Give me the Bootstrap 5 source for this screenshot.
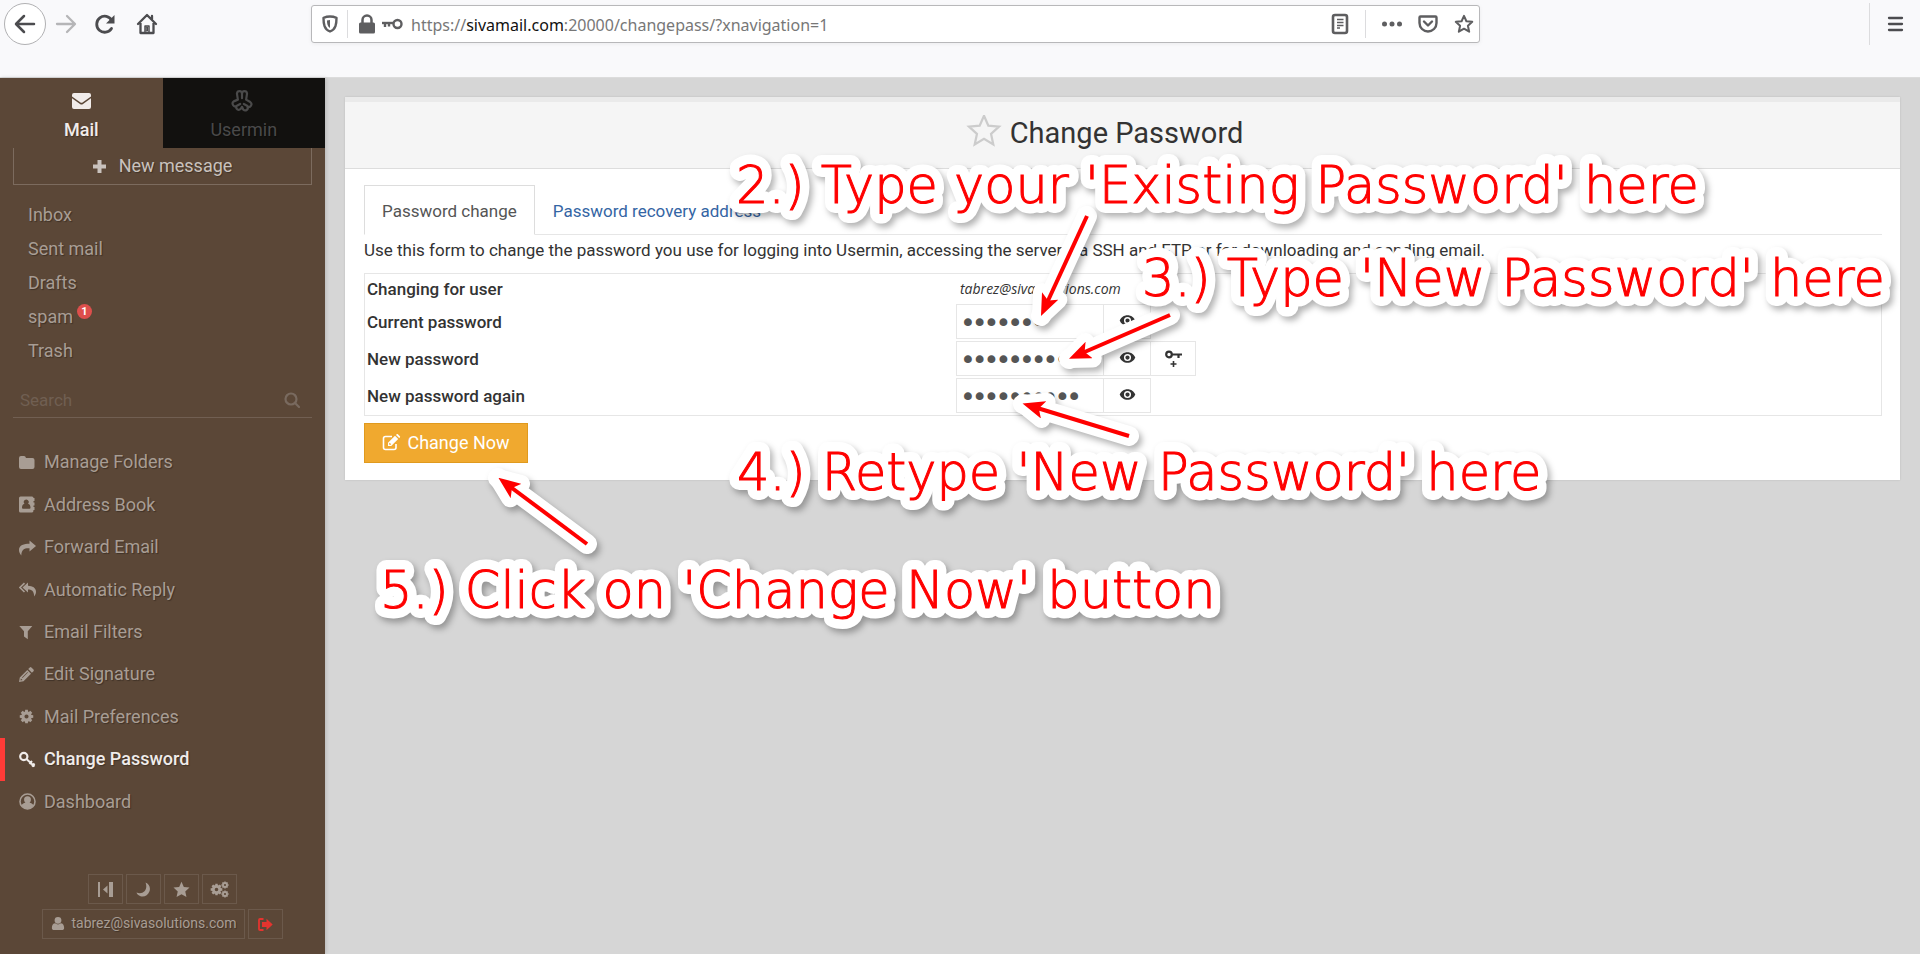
<!DOCTYPE html>
<html lang="en">
<head>
<meta charset="utf-8">
<meta name="viewport" content="width=device-width, initial-scale=1">
<title>Change Password</title>
<link rel="stylesheet" href="https://cdn.jsdelivr.net/npm/bootstrap@5.3.0/dist/css/bootstrap.min.css">
<style>
  body { font-family: Roboto, "Liberation Sans", sans-serif; font-size: 17px; line-height: 24px; color: #333; background: #d6d6d6; }
  svg { flex: none; display: block; }
  button { background: none; border: 0; padding: 0; color: inherit; }

  /* browser toolbar */
  .toolbar { height: 78px; padding: 3px 16px 0 4px; background: #f9f9fb; border-bottom: 1px solid #dcdcdc; color: #4c4c4f; }
  .tool-row { height: 42px; }
  .nav-circle { width: 42px; height: 42px; border: 1px solid #b1b1b3; border-radius: 50%; background: #fff; }
  .nav-tools { width: 307px; flex: none; }
  .url-box { width: 1169px; height: 38px; border: 1px solid #b8b8ba; border-radius: 3px; background: #fff; color: #5e5e60; padding: 0 5px 0 9px; box-shadow: 0 1px 4px rgba(0,0,0,.06); }
  .url-text { font-family: "Noto Sans", "Open Sans", sans-serif; font-size: 16px; color: #777; padding-top: 2px; }
  .url-text b { font-weight: 400; color: #111; }
  .vline { width: 1px; height: 28px; background: #dcdcde; flex: none; }
  .vline-tall { height: 42px; }

  /* sidebar */
  .side { width: 325px; flex: none; background: #5b4737; color: #a89d94; font-size: 18px; box-shadow: 1px 0 4px rgba(0,0,0,.15); }
  .side a, .side button { color: inherit; text-decoration: none; text-shadow: 1px 1px 1px rgba(0,0,0,.3); }
  .side-tabs { height: 70px; }
  .side-tab { padding-top: 12px; gap: 6px; }
  .side-tab.active { color: #f1ecea !important; font-weight: 500; }
  .side-tab.dark { background: #12110f; color: #4a4a4a !important; }
  .compose { margin: 0 13px; height: 37px; border: 1px solid #7c6b5e; border-top: 0; color: #c9c2bd !important; gap: 13px; }
  .folders { margin: 13px 0 0 28px; }
  .folders a { height: 34px; }
  .count { width: 15px; height: 15px; border-radius: 50%; background: #dd4f4c; color: #fff; font-size: 11px; font-weight: 700; line-height: 15px; text-align: center; margin: 0 0 12px 4px; text-shadow: none; }
  .find { margin: 15px 13px 0; height: 35px; border-bottom: 1px solid #715f52; padding: 0 12px 0 7px; color: #796a5f; }
  .find input { background: none; border: 0; outline: 0; font-size: 17px; padding: 0; color: inherit; }
  .find input::placeholder { color: #705f52; opacity: 1; }
  .menu { margin-top: 23px; height: 382px; }
  .menu a { gap: 8px; padding-left: 14px; border-left: 5px solid transparent; }
  .menu a.active { border-color: #ff3b37; color: #f0ecea; font-weight: 500; }
  .menu svg { width: 17px; height: 17px; }
  .side-foot { padding-bottom: 15px; gap: 5px; font-size: 14px; }
  .side-foot .boxed { border: 1px solid #6b594b; height: 30px; min-width: 35px; justify-content: center; }
  .side-foot .user { padding: 0 7px 2px 8px; gap: 6px; }
  .gap-3px { gap: 3px; }

  /* content panel */
  .content { padding: 19px 20px; }
  .panel { background: #fff; box-shadow: 0 0 2px rgba(0,0,0,.12); }
  .panel-head { height: 72px; background: #f5f5f5; border-top: 5px solid #eaeaea; border-bottom: 1px solid #ddd; padding: 0 36px 4px 0; gap: 8px; }
  .panel-head h1 { font-size: 29px; font-weight: 400; line-height: 36px; margin: 0; }
  .head-star { color: #ccc; }
  .panel-main { padding: 16px 18px 17px 19px; }
  .tabs { border-bottom: 1px solid #e6e6e6; }
  .tabs a { height: 50px; padding: 2px 17px 0; text-decoration: none; color: #3465a4; border: 1px solid transparent; margin-bottom: -1px; }
  .tabs a.active { color: #555; border-color: #ddd #ddd #fff; background: #fff; }
  .intro { margin: 3px 0 11px; }
  .form-grid { width: 100%; border: 1px solid #e6e6e6; margin-bottom: 7px; border-collapse: separate; border-spacing: 0; }
  .form-grid th { width: 589px; font-weight: 500; padding: 0 2px 2px; }
  .form-grid td { padding: 0 2px 2px; }
  .form-grid tr:first-child > * { padding-top: 3px; padding-bottom: 3px; }
  .form-grid .who { font-family: "Open Sans", sans-serif; font-size: 14px; font-style: italic; }
  .pw { width: 148px; height: 35px; border: 1px solid #e6e6e6; font-family: "DejaVu Sans", sans-serif; font-size: 20px; color: #555; padding: 0 5px; outline: 0; border-radius: 0; -webkit-text-stroke: 2px #555; }
  .side-btn { width: 47px; height: 35px; border: 1px solid #e6e6e6; border-left: 0; padding-bottom: 3px; }
  .key-btn { width: 45px; }
  .save { background: #f0a92f; border: 1px solid #e09a1e; color: #fff; font-size: 18px; height: 40px; width: 164px; gap: 6px; }

  /* step callouts lying over the page */
  .callouts { position: absolute; left: 0; top: 0; pointer-events: none; overflow: hidden; }
  .callouts text { font-family: "DejaVu Sans Light", "DejaVu Sans", sans-serif; font-weight: 200; font-size: 51px; }
  .halo { fill: #fff; stroke: #fff; stroke-width: 20px; stroke-linecap: round; stroke-linejoin: round; filter: drop-shadow(3px 4px 3px rgba(0,0,0,.3)); }
  .ink { fill: #f00; stroke: #f00; stroke-width: 1px; }
  .shaft { stroke-width: 4px; }
</style>
</head>
<body class="d-flex flex-column min-vh-100 position-relative">

<svg width="0" height="0" class="position-absolute" aria-hidden="true">
  <symbol id="star-o" viewBox="0 0 24 24"><path d="M12 2.200l2.900 6.500 7 .7-5.200 4.800 1.500 7L12 17.600l-6.200 3.600 1.500-7L2.100 9.400l7-.7z" fill="none" stroke="currentColor" stroke-width="2.400" stroke-linejoin="round"/></symbol>
  <symbol id="eye" viewBox="0 0 24 24"><path fill="currentColor" d="M12 4.500C7 4.500 2.700 7.600 1 12c1.700 4.400 6 7.500 11 7.500s9.300-3.100 11-7.500c-1.700-4.400-6-7.500-11-7.500zM12 17a5 5 0 1 1 0-10 5 5 0 0 1 0 10zm0-8a3 3 0 1 0 0 6 3 3 0 0 0 0-6z"/></symbol>
  <symbol id="person" viewBox="0 0 16 16"><path fill="currentColor" d="M8 8.300a3.900 3.900 0 1 0 0-7.800 3.900 3.900 0 0 0 0 7.800zM1 13c0-3 1.500-5.300 3.800-5.300C5.600 8.500 6.700 9 8 9s2.400-.5 3.200-1.300C13.500 7.700 15 10 15 13c0 1.600-1 2.500-2.500 2.500h-9C2 15.500 1 14.600 1 13z"/></symbol>
  <symbol id="gear" viewBox="0 0 16 16"><g fill="currentColor"><path fill-rule="evenodd" d="M8 2.500a5.500 5.500 0 1 0 0 11 5.500 5.500 0 0 0 0-11zm0 3.300a2.200 2.200 0 1 1 0 4.400 2.200 2.200 0 0 1 0-4.400z"/><path d="M6.600.8h2.800l.4 3H6.200zM6.600 15.200h2.800l.4-3H6.200zM.8 6.600v2.800l3 .4V6.200zM15.200 6.600v2.800l-3 .4V6.200zM1.900 3.900l2-2 2.400 1.800-2.600 2.600zM14.100 12.100l-2 2-2.400-1.800 2.600-2.600zM12.100 1.900l2 2-1.800 2.400-2.600-2.600zM3.900 14.100l-2-2 1.800-2.400 2.600 2.600z"/></g></symbol>
</svg>

<header class="toolbar">
  <div class="tool-row d-flex align-items-center">
    <div class="nav-tools d-flex align-items-center">
      <button class="nav-circle d-flex align-items-center justify-content-center" aria-label="Back"><svg width="22" height="22" viewBox="0 0 22 22" fill="none" stroke="currentColor" stroke-width="2.500" stroke-linecap="round" stroke-linejoin="round"><path d="M20 11H2.500M10 3l-8 8 8 8"/></svg></button>
      <button class="ms-2" aria-label="Forward"><svg width="24" height="22" viewBox="0 0 22 22" fill="none" stroke="#b5b5b7" stroke-width="2.300" stroke-linecap="round" stroke-linejoin="round"><path d="M2 11h17.500M12 3l8 8-8 8"/></svg></button>
      <button class="ms-3" aria-label="Reload"><svg width="22" height="22" viewBox="0 0 22 22"><path d="M17.500 15.500a8 8 0 1 1 .3-8" fill="none" stroke="currentColor" stroke-width="2.800" stroke-linecap="round"/><path d="M20.500 2v8.500H12z" fill="currentColor"/></svg></button>
      <button class="ms-3 ps-1" aria-label="Home"><svg width="22" height="22" viewBox="0 0 22 22" fill="none" stroke="currentColor" stroke-width="2.300" stroke-linecap="round" stroke-linejoin="round"><path d="M2 11l9-9 9 9M4.500 10v10h13V10M16 3v4"/><path d="M9 20v-7h4v7z" stroke-width="1.500"/><path d="M10.500 14h1v4h-1z" fill="currentColor" stroke-width="1"/></svg></button>
    </div>
    <div class="url-box d-flex align-items-center">
      <svg width="18" height="18" viewBox="0 0 18 18"><path d="M9 1.500c2.500 0 4.800.6 6.500 1.300 0 6-.6 11.500-6.500 13.700C3.100 14.300 2.500 8.800 2.500 2.800 4.200 2.100 6.500 1.500 9 1.500z" fill="none" stroke="currentColor" stroke-width="2.400" stroke-linejoin="round"/><path d="M9 5v8C6.600 11.700 6 9 6 5.500z" fill="currentColor"/></svg>
      <span class="vline ms-2"></span>
      <svg class="ms-2" width="22" height="20" viewBox="0 0 18 20"><rect x="1" y="8.500" width="16" height="11" rx="1.500" fill="currentColor"/><path d="M4.500 9V6a4.500 4.500 0 0 1 9 0v3" fill="none" stroke="currentColor" stroke-width="2.500"/></svg>
      <svg class="ms-1" width="21" height="14" viewBox="0 0 21 14" fill="none" stroke="currentColor"><circle cx="15.500" cy="7" r="4" stroke-width="2.400"/><path d="M0 6h11" stroke-width="2.400"/><path d="M3 6v4M7 6v3.500" stroke-width="2.400"/></svg>
      <span class="url-text ms-2">https://<b>sivamail.com</b>:20000/changepass/?xnavigation=1</span>
      <svg class="ms-auto" width="18" height="22" viewBox="0 0 18 22" fill="none" stroke="currentColor"><rect x="2" y="2" width="14" height="18" rx="2" stroke-width="2.600"/><path d="M6 6.500h6.500M6 9.500h6.500M6 12.500h6.500M6 15h3" stroke-width="1.300"/></svg>
      <span class="vline ms-3"></span>
      <svg class="ms-3" width="20" height="20" viewBox="0 0 20 20" fill="currentColor"><circle cx="2.500" cy="10" r="2.500"/><circle cx="10" cy="10" r="2.500"/><circle cx="17.500" cy="10" r="2.500"/></svg>
      <svg class="ms-3" width="20" height="18" viewBox="0 0 20 18" fill="none" stroke="currentColor" stroke-width="2.400" stroke-linejoin="round" stroke-linecap="round"><path d="M1.500 2.500q0-1 1-1h15q1 0 1 1V8a8.500 8.500 0 0 1-17 0z"/><path d="M6 6.500l4 4 4-4"/></svg>
      <svg class="ms-3" width="20" height="22"><use href="#star-o"/></svg>
    </div>
    <span class="vline vline-tall ms-auto"></span>
    <button class="ms-3" aria-label="Menu"><svg width="18" height="16" viewBox="0 0 18 16" stroke="currentColor" stroke-width="2.300" stroke-linecap="round"><path d="M3 2h13M3 8h13M3 14h13"/></svg></button>
  </div>
</header>

<div class="d-flex flex-grow-1">
  <aside class="side d-flex flex-column">
    <nav class="side-tabs d-flex">
      <a href="#" class="side-tab active w-50 d-flex flex-column align-items-center">
        <svg width="21" height="22" viewBox="0 0 21 22"><path d="M1 6.500V5a2 2 0 0 1 2-2h15a2 2 0 0 1 2 2v1.500l-8.500 6q-1 .7-2 0zM1 8.300l8 5.700q1.500 1 3 0l8-5.700V17a2 2 0 0 1-2 2H3a2 2 0 0 1-2-2z" fill="currentColor"/></svg>
        <span>Mail</span></a>
      <a href="#" class="side-tab dark w-50 d-flex flex-column align-items-center">
        <svg class="me-1" width="24" height="22" viewBox="0 0 24 24" fill="none" stroke="currentColor" stroke-width="2.400" stroke-linejoin="round" stroke-linecap="round"><path d="M7.500 10.500L6.500 4Q6.800 1.300 9.300 1.300 12 1.300 12 4q0-2.700 2.700-2.700 2.500 0 2.800 2.700l-1 6.500 4.500 2.600q2.200 1.700.8 4t-3.800 1.200q1 2.200-.9 3.500t-3.800-.6L12 18.300l-1.300 2.200q-1.900 1.900-3.800.6T6 17.600q-2.400 1.200-3.800-1.200t.8-4zM12 4v5M6 17.400l4-2.200M18 17.400l-4-2.200"/></svg>
        <span>Usermin</span></a>
    </nav>
    <button class="compose d-flex align-items-center justify-content-center"><svg width="13" height="13" viewBox="0 0 13 13"><path d="M6.500 0v13M0 6.500h13" stroke="currentColor" stroke-width="4"/></svg><span>New message</span></button>
    <nav class="folders d-flex flex-column">
      <a href="#" class="d-flex align-items-center">Inbox</a>
      <a href="#" class="d-flex align-items-center">Sent mail</a>
      <a href="#" class="d-flex align-items-center">Drafts</a>
      <a href="#" class="d-flex align-items-center">spam<span class="count">1</span></a>
      <a href="#" class="d-flex align-items-center">Trash</a>
    </nav>
    <div class="find d-flex align-items-center">
      <input class="flex-grow-1" type="text" placeholder="Search" aria-label="Search">
      <svg width="16" height="16" viewBox="0 0 16 16" fill="none" stroke="currentColor" stroke-width="2.200" stroke-linecap="round"><circle cx="7" cy="7" r="5.500"/><path d="M11 11l4 4"/></svg>
    </div>
    <nav class="menu d-flex flex-column">
      <a href="#" class="d-flex align-items-center flex-fill"><svg viewBox="0 0 17 17"><path fill="currentColor" d="M0 4q0-2 2-2h3q1.500 0 2 2h6.500q2 0 2 2v7q0 2-2 2H2q-2 0-2-2z"/></svg><span>Manage Folders</span></a>
      <a href="#" class="d-flex align-items-center flex-fill"><svg viewBox="0 0 17 17"><path fill="currentColor" fill-rule="evenodd" d="M1.500.5h11.500q1.500 0 1.500 1.500h1v3h-1v1.500h1v3h-1V11h1v3h-1q0 2.500-1.500 2.500H1.500Q0 16.500 0 15V2Q0 .5 1.500.5zM7.200 3.500a2.500 2.500 0 0 0-1.700 4.300C3.800 8.200 3 9.700 3 11.700q0 1 1 1h6.500q1 0 1-1c0-2-.8-3.500-2.500-3.900a2.500 2.500 0 0 0-1.800-4.300z"/></svg><span>Address Book</span></a>
      <a href="#" class="d-flex align-items-center flex-fill"><svg viewBox="0 0 17 17"><path fill="currentColor" d="M10.500 1.500L17 7l-6.500 5.500V9.300C5.500 9 2.500 10.500 2.300 16.500.3 14 0 12.500 0 10.800 0 6 5 4.800 10.500 4.700z"/></svg><span>Forward Email</span></a>
      <a href="#" class="d-flex align-items-center flex-fill"><svg viewBox="0 0 17 17"><path fill="currentColor" d="M9 1.500L3.500 6.500 9 11.500V8.500c3.500 0 6 1 6.200 7 1.500-2 1.800-3.500 1.800-4.700 0-4-3.500-5.800-8-6z"/><path d="M5.500 2.200L1 6.500l4.500 4.500" fill="none" stroke="currentColor" stroke-width="1.600"/></svg><span>Automatic Reply</span></a>
      <a href="#" class="d-flex align-items-center flex-fill"><svg viewBox="0 0 17 17"><path fill="currentColor" d="M.3 3h13L8.800 8.300v8L5 13.500V8.300z"/></svg><span>Email Filters</span></a>
      <a href="#" class="d-flex align-items-center flex-fill"><svg viewBox="0 0 17 17"><path fill="currentColor" fill-rule="evenodd" d="M0 16l.8-4.500 7.500-7.500 3.700 3.700-7.500 7.500zM9.200 3.100l1.600-1.600q.8-.8 1.600 0l2.100 2.100q.8.800 0 1.600l-1.600 1.600zM1.500 14.500l2-.4-1.600-1.600zM3 11.500l5.500-5.400.4.400L3.500 12z"/></svg><span>Edit Signature</span></a>
      <a href="#" class="d-flex align-items-center flex-fill"><svg viewBox="0 0 17 17"><use href="#gear" width="15" height="17"/></svg><span>Mail Preferences</span></a>
      <a href="#" class="active d-flex align-items-center flex-fill"><svg viewBox="0 0 17 17" fill="none" stroke="currentColor"><circle cx="4.800" cy="5.500" r="3.600" stroke-width="2.200"/><path d="M7.500 8l8 7.500M10.500 13l2.500-3M13 15.500l2.500-3" stroke-width="2"/></svg><span>Change Password</span></a>
      <a href="#" class="d-flex align-items-center flex-fill"><svg viewBox="0 0 17 17"><circle cx="8.500" cy="8.500" r="7.500" fill="none" stroke="currentColor" stroke-width="1.600"/><path fill="currentColor" d="M8.500 3.200a3.400 3.400 0 0 0-3.400 3.600c0 1.300.6 2.300 1.400 2.900C4.500 10 3 11 2.500 12.500 4 14.800 6 16 8.500 16s4.500-1.200 6-3.500c-.5-1.500-2-2.500-4-2.800.8-.6 1.400-1.600 1.400-2.900a3.400 3.400 0 0 0-3.400-3.600z"/></svg><span>Dashboard</span></a>
    </nav>
    <div class="side-foot d-flex flex-column align-items-center mt-auto">
      <div class="d-flex gap-3px">
        <button class="boxed d-flex align-items-center" aria-label="Collapse"><svg width="15" height="15" viewBox="0 0 15 15" fill="currentColor"><path d="M0 0h2v15H0zM11 0h4v15h-4zM9.500 3.500v8L5 7.500z"/></svg></button>
        <button class="boxed d-flex align-items-center" aria-label="Night mode"><svg width="15" height="15" viewBox="0 0 15 15"><path fill="currentColor" d="M9.500.5C13 2 14.800 5.500 13.500 9.300 12 13.500 8 15.300 4.500 14.200 2.500 13.600 1 12.200.5 10.500c3 1.200 6 .8 8-1.300S10.800 3.500 9.500.5z"/></svg></button>
        <button class="boxed d-flex align-items-center" aria-label="Favourites"><svg width="17" height="17" viewBox="0 0 24 24"><path fill="currentColor" d="M12 1l3.300 7.400 8 .9-6 5.400 1.700 7.900-7-4-7 4 1.700-7.900-6-5.400 8-.9z"/></svg></button>
        <button class="boxed d-flex align-items-center" aria-label="Settings"><svg width="19" height="17" viewBox="0 0 19 17"><use href="#gear" x="0" y="2" width="13" height="13"/><use href="#gear" x="11" y="0" width="8" height="8"/><use href="#gear" x="11" y="9" width="8" height="8"/></svg></button>
      </div>
      <div class="d-flex gap-3px">
        <a href="#" class="boxed user d-flex align-items-center"><svg width="14" height="15"><use href="#person"/></svg>tabrez@sivasolutions.com</a>
        <button class="boxed d-flex align-items-center" aria-label="Log out"><svg width="15" height="13" viewBox="0 0 15 13"><path d="M5.500 1H2Q1 1 1 2v9q0 1 1 1h3.500" fill="none" stroke="#e4342f" stroke-width="1.800"/><path fill="#e4342f" d="M4 4h4.500V.8l6.200 5.700-6.200 5.700V9H4z"/></svg></button>
      </div>
    </div>
  </aside>

  <main class="content flex-grow-1">
    <section class="panel">
      <div class="panel-head d-flex align-items-center justify-content-center">
        <svg class="head-star" width="36" height="36" viewBox="0 0 24 24"><path d="M12 .5l2.900 6.600 7.100.7-5.300 4.800 1.500 7L12 15.900l-6.200 3.700 1.500-7L2 7.800l7.100-.7z" fill="none" stroke="currentColor" stroke-width="1.500"/></svg>
        <h1>Change Password</h1>
      </div>
      <div class="panel-main">
        <nav class="tabs d-flex">
          <a href="#" class="active d-flex align-items-center">Password change</a>
          <a href="#" class="d-flex align-items-center">Password recovery address</a>
        </nav>
        <p class="intro">Use this form to change the password you use for logging into Usermin, accessing the server via SSH and FTP or for downloading and sending email.</p>
        <form>
          <table class="form-grid">
            <tr><th>Changing for user</th><td class="who"><span class="ps-1">tabrez@sivasolutions.com</span></td></tr>
            <tr><th><label for="cur">Current password</label></th><td><div class="d-flex"><input id="cur" class="pw" type="password" value="1234567"><button type="button" class="side-btn d-flex align-items-center justify-content-center" aria-label="Show"><svg width="17" height="17"><use href="#eye"/></svg></button></div></td></tr>
            <tr><th><label for="new">New password</label></th><td><div class="d-flex"><input id="new" class="pw" type="password" value="1234567890"><button type="button" class="side-btn d-flex align-items-center justify-content-center" aria-label="Show"><svg width="17" height="17"><use href="#eye"/></svg></button><button type="button" class="side-btn key-btn d-flex align-items-center justify-content-center" aria-label="Generate"><svg class="mt-1" width="17" height="18" viewBox="0 0 17 18" fill="none" stroke="currentColor"><circle cx="4" cy="4.500" r="2.800" stroke-width="2.200"/><path d="M6.500 4.500H17M13.500 4.500V8" stroke-width="2.200"/><path d="M8.500 11v6M5.500 14h6" stroke-width="1.600"/></svg></button></div></td></tr>
            <tr><th><label for="again">New password again</label></th><td><div class="d-flex"><input id="again" class="pw" type="password" value="1234567890"><button type="button" class="side-btn d-flex align-items-center justify-content-center" aria-label="Show"><svg width="17" height="17"><use href="#eye"/></svg></button></div></td></tr>
          </table>
          <button type="submit" class="save d-flex align-items-center justify-content-center"><svg width="19" height="18" viewBox="0 0 19 18"><path d="M14 10v3.500q0 2-2 2H3.500q-2 0-2-2v-9q0-2 2-2H10" fill="none" stroke="currentColor" stroke-width="1.600"/><path fill="currentColor" fill-rule="evenodd" d="M6 12V8.800L13 1.800l3.200 3.200-7 7zM14 .9l.7-.7q.6-.5 1.200 0l2 2q.5.600 0 1.200l-.8.7zM7.200 9.300v1.500h1.500l.5-.6-1.500-1.500z"/></svg>Change Now</button>
        </form>
      </div>
    </section>
  </main>
</div>

<svg class="callouts" width="1920" height="680">
  <defs><marker id="tip" viewBox="0 0 22 18" refX="10" refY="9" markerWidth="22" markerHeight="18" markerUnits="userSpaceOnUse" orient="auto"><path d="M22 9L0 0l5 9-5 9z" fill="#f00" stroke="none"/></marker>
  <marker id="tip-halo" viewBox="-12 -12 46 42" refX="22" refY="9" markerWidth="46" markerHeight="42" markerUnits="userSpaceOnUse" orient="auto"><path d="M22 9L0 0l5 9-5 9z" fill="#fff" stroke="#fff" stroke-width="18" stroke-linejoin="round"/></marker></defs>
  <g class="halo"><path d="M1087 216L1041 316" marker-end="url(#tip-halo)"/></g>
  <g class="halo"><path d="M1170 315L1069 359" marker-end="url(#tip-halo)"/></g>
  <g class="halo"><path d="M1129 436L1023 404" marker-end="url(#tip-halo)"/></g>
  <g class="halo"><path d="M587 544L498 478" marker-end="url(#tip-halo)"/></g>
  <use class="halo" href="#step2"/>
  <use class="halo" href="#step3"/>
  <use class="halo" href="#step4"/>
  <use class="halo" href="#step5"/>
  <g class="ink">
    <text id="step2" x="736" y="203">2.) Type your 'Existing Password' here</text>
    <text id="step3" x="1142" y="296">3.) Type 'New Password' here</text>
    <text id="step4" x="737" y="490">4.) Retype 'New Password' here</text>
    <text id="step5" x="380" y="608">5.) Click on 'Change Now' button</text>
  </g>
  <g class="ink shaft">
    <path d="M1087 216L1046 305" marker-end="url(#tip)"/>
    <path d="M1170 315L1080 354" marker-end="url(#tip)"/>
    <path d="M1129 436L1034 407" marker-end="url(#tip)"/>
    <path d="M587 544L508 485" marker-end="url(#tip)"/>
  </g>
</svg>

<script src="https://cdn.jsdelivr.net/npm/bootstrap@5.3.0/dist/js/bootstrap.bundle.min.js"></script>
</body>
</html>
